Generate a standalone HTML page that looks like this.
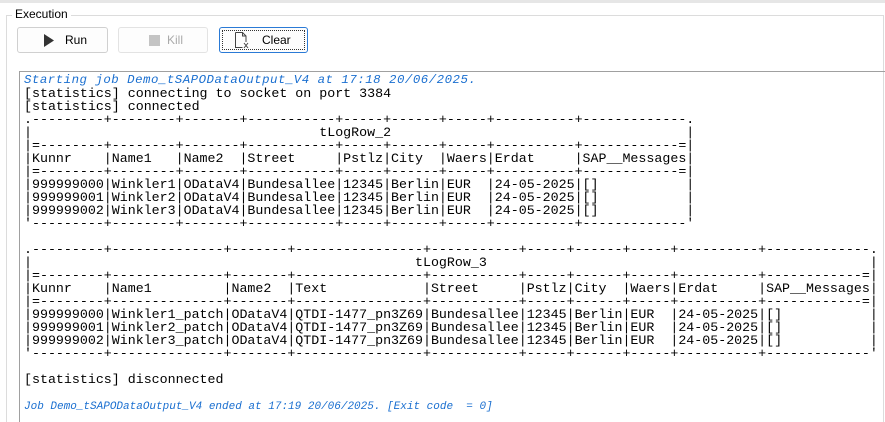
<!DOCTYPE html>
<html><head><meta charset="utf-8"><style>
html,body{margin:0;padding:0;width:885px;height:422px;overflow:hidden;background:#fff;font-family:"Segoe UI","Liberation Sans",sans-serif;position:relative}
.strip{position:absolute;left:0;top:0;width:885px;height:3px;background:#e6e6e6}
.group{position:absolute;left:6px;top:15px;width:876px;height:420px;border:1px solid #dcdcdc;border-bottom:none}
.glabel{position:absolute;left:12px;top:7px;background:#fff;padding:0 3px;font-size:12px;color:#000}
.btn{position:absolute;top:27px;height:26px;border:1px solid #d0d0d0;border-radius:3px;background:#fdfdfd;font-size:12px;box-sizing:border-box}
.btn span{position:absolute;top:5px}
.panel{position:absolute;left:19px;top:71px;width:870px;height:360px;border-left:1px solid #a0a0a0;border-top:1px solid #a0a0a0}
pre{position:absolute;left:24px;top:73px;margin:0;font-family:"Liberation Mono",monospace;font-size:13.3px;line-height:13px;color:#000;letter-spacing:0}
.b{color:#1a6fd0;font-style:italic;font-size:12.4px;letter-spacing:0.5px}
.j{color:#1a6fd0;font-style:italic;font-size:11px;letter-spacing:0}
</style></head><body>
<div class="strip"></div>
<div class="group"></div>
<div class="glabel">Execution</div>
<div class="btn" style="left:17px;width:91px"><svg style="position:absolute;left:26px;top:6px" width="10" height="13"><polygon points="0,0 10,6.5 0,13" fill="#333"/></svg><span style="left:47px">Run</span></div>
<div class="btn" style="left:118px;width:90px;border-color:#e3e3e3"><div style="position:absolute;left:30px;top:7px;width:11px;height:11px;background:#c4c4c4"></div><span style="left:48px;color:#aaa">Kill</span></div>
<div class="btn" style="left:219px;width:89px;border-color:#2a7ad6"><div style="position:absolute;left:2px;top:2px;right:2px;bottom:2px;border:1px dotted #333"></div><svg style="position:absolute;left:14px;top:4px" width="16" height="17"><path d="M1.5 0.5h7l3.5 3.5v6M1.5 0.5v15h7M8.5 0.5v3.5h3.5" fill="none" stroke="#444"/><path d="M10 11l4 5M14 11l-4 5" stroke="#444"/></svg><span style="left:42px">Clear</span></div>
<div class="panel"></div>
<pre><span class="b">Starting job Demo_tSAPODataOutput_V4 at 17:18 20/06/2025.</span>
[statistics] connecting to socket on port 3384
[statistics] connected
.---------+--------+-------+-----------+-----+------+-----+----------+-------------.
|                                    tLogRow_2                                     |
|=--------+--------+-------+-----------+-----+------+-----+----------+------------=|
|Kunnr    |Name1   |Name2  |Street     |Pstlz|City  |Waers|Erdat     |SAP__Messages|
|=--------+--------+-------+-----------+-----+------+-----+----------+------------=|
|999999000|Winkler1|ODataV4|Bundesallee|12345|Berlin|EUR  |24-05-2025|[]           |
|999999001|Winkler2|ODataV4|Bundesallee|12345|Berlin|EUR  |24-05-2025|[]           |
|999999002|Winkler3|ODataV4|Bundesallee|12345|Berlin|EUR  |24-05-2025|[]           |
'---------+--------+-------+-----------+-----+------+-----+----------+-------------'

.---------+--------------+-------+----------------+-----------+-----+------+-----+----------+-------------.
|                                                tLogRow_3                                                |
|=--------+--------------+-------+----------------+-----------+-----+------+-----+----------+------------=|
|Kunnr    |Name1         |Name2  |Text            |Street     |Pstlz|City  |Waers|Erdat     |SAP__Messages|
|=--------+--------------+-------+----------------+-----------+-----+------+-----+----------+------------=|
|999999000|Winkler1_patch|ODataV4|QTDI-1477_pn3Z69|Bundesallee|12345|Berlin|EUR  |24-05-2025|[]           |
|999999001|Winkler2_patch|ODataV4|QTDI-1477_pn3Z69|Bundesallee|12345|Berlin|EUR  |24-05-2025|[]           |
|999999002|Winkler3_patch|ODataV4|QTDI-1477_pn3Z69|Bundesallee|12345|Berlin|EUR  |24-05-2025|[]           |
'---------+--------------+-------+----------------+-----------+-----+------+-----+----------+-------------'

[statistics] disconnected

<span class="j">Job Demo_tSAPODataOutput_V4 ended at 17:19 20/06/2025. [Exit code  = 0]</span></pre>
</body></html>
